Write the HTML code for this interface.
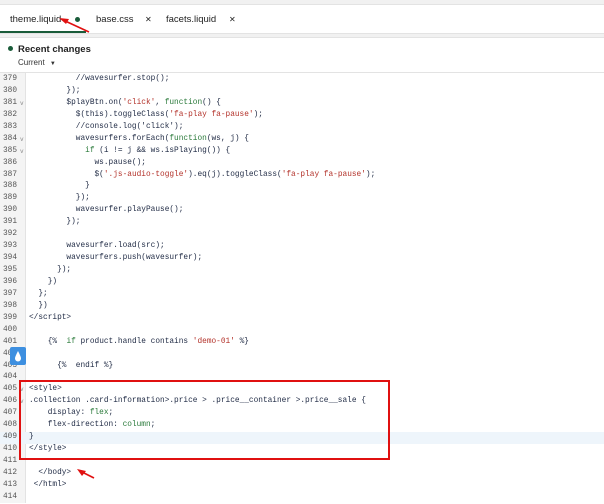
<!DOCTYPE html><html><head><style>
*{margin:0;padding:0;box-sizing:border-box}
body{width:604px;height:500px;overflow:hidden;background:#fff;font-family:"Liberation Sans",sans-serif;position:relative}
.top{position:absolute;left:0;top:0;width:604px;height:5px;background:#f1f1f1;border-bottom:1px solid #e3e3e3}
.tabs{position:absolute;top:5px;left:0;width:604px;height:28px;background:#fff;font-size:9.5px;color:#222}
.tabs span{position:absolute;top:9px}
.band{position:absolute;top:33px;left:0;width:604px;height:5px;background:#f1f1f1;border-top:1px solid #e3e3e3;border-bottom:1px solid #e3e3e3}
.rc{position:absolute;top:44px;left:18px;font-size:9.5px;font-weight:bold;color:#222}
.cur{position:absolute;top:58px;left:18px;font-size:8px;color:#333}
.code{position:absolute;top:72px;left:0;width:604px;border-top:1px solid #e3e3e3;font-family:"Liberation Mono",monospace;font-size:7.8px;line-height:11.94px;padding-top:1px}
.gut{position:absolute;left:0;top:0;width:26px;height:430px;background:#f4f4f4;border-right:1px solid #e3e3e3}
.l{position:relative;height:11.94px;white-space:pre;color:#1f2a44}
.n{position:absolute;left:3px;color:#555;width:24px}
.f{position:absolute;left:20px;color:#888;font-size:6px}
.t{position:absolute;left:29px}
.k{color:#2a7a3a}.s{color:#b3322a}
</style></head><body>
<div class="top"></div>
<div class="tabs">
<span style="left:10px">theme.liquid</span>
<div style="position:absolute;left:75px;top:12px;width:5px;height:5px;border-radius:50%;background:#1a5c3a"></div>
<span style="left:96px">base.css</span><span style="left:145px;font-size:8px;top:10px">✕</span>
<span style="left:166px">facets.liquid</span><span style="left:229px;font-size:8px;top:10px">✕</span>
<div style="position:absolute;left:0;top:26px;width:86px;height:2px;background:#1a5c3a"></div>
</div>
<svg style="position:absolute;left:55px;top:12px" width="36" height="22"><line x1="34" y1="20" x2="8" y2="8" stroke="#e01010" stroke-width="1.6"/><polygon points="4,6 14,7 11,12" fill="#e01010"/></svg>
<div class="band"></div>
<div style="position:absolute;left:8px;top:46px;width:5px;height:5px;border-radius:50%;background:#1a5c3a"></div>
<div class="rc">Recent changes</div>
<div class="cur">Current <span style="font-size:6px;margin-left:3px">▼</span></div>
<div class="code"><div class="gut"></div>
<div class="l"><span class="n">379</span><span class="t">          //wavesurfer.stop();</span></div>
<div class="l"><span class="n">380</span><span class="t">        });</span></div>
<div class="l"><span class="n">381</span><span class="f">v</span><span class="t">        $playBtn.on(<span class="s">'click'</span>, <span class="k">function</span>() {</span></div>
<div class="l"><span class="n">382</span><span class="t">          $(this).toggleClass(<span class="s">'fa-play fa-pause'</span>);</span></div>
<div class="l"><span class="n">383</span><span class="t">          //console.log('click');</span></div>
<div class="l"><span class="n">384</span><span class="f">v</span><span class="t">          wavesurfers.forEach(<span class="k">function</span>(ws, j) {</span></div>
<div class="l"><span class="n">385</span><span class="f">v</span><span class="t">            <span class="k">if</span> (i != j &amp;&amp; ws.isPlaying()) {</span></div>
<div class="l"><span class="n">386</span><span class="t">              ws.pause();</span></div>
<div class="l"><span class="n">387</span><span class="t">              $(<span class="s">'.js-audio-toggle'</span>).eq(j).toggleClass(<span class="s">'fa-play fa-pause'</span>);</span></div>
<div class="l"><span class="n">388</span><span class="t">            }</span></div>
<div class="l"><span class="n">389</span><span class="t">          });</span></div>
<div class="l"><span class="n">390</span><span class="t">          wavesurfer.playPause();</span></div>
<div class="l"><span class="n">391</span><span class="t">        });</span></div>
<div class="l"><span class="n">392</span></div>
<div class="l"><span class="n">393</span><span class="t">        wavesurfer.load(src);</span></div>
<div class="l"><span class="n">394</span><span class="t">        wavesurfers.push(wavesurfer);</span></div>
<div class="l"><span class="n">395</span><span class="t">      });</span></div>
<div class="l"><span class="n">396</span><span class="t">    })</span></div>
<div class="l"><span class="n">397</span><span class="t">  };</span></div>
<div class="l"><span class="n">398</span><span class="t">  })</span></div>
<div class="l"><span class="n">399</span><span class="t">&lt;/script&gt;</span></div>
<div class="l"><span class="n">400</span></div>
<div class="l"><span class="n">401</span><span class="t">    {%  <span class="k">if</span> product.handle contains <span class="s">'demo-01'</span> %}</span></div>
<div class="l"><span class="n">402</span></div>
<div class="l"><span class="n">403</span><span class="t">      {%  endif %}</span></div>
<div class="l"><span class="n">404</span></div>
<div class="l"><span class="n">405</span><span class="f">v</span><span class="t">&lt;style&gt;</span></div>
<div class="l"><span class="n">406</span><span class="f">v</span><span class="t">.collection .card-information&gt;.price &gt; .price__container &gt;.price__sale {</span></div>
<div class="l"><span class="n">407</span><span class="t">    display: <span class="k">flex</span>;</span></div>
<div class="l"><span class="n">408</span><span class="t">    flex-direction: <span class="k">column</span>;</span></div>
<div class="l" style="background:#eef5fb"><span class="n">409</span><span class="t">}</span></div>
<div class="l"><span class="n">410</span><span class="t">&lt;/style&gt;</span></div>
<div class="l"><span class="n">411</span></div>
<div class="l"><span class="n">412</span><span class="t">  &lt;/body&gt;</span></div>
<div class="l"><span class="n">413</span><span class="t"> &lt;/html&gt;</span></div>
<div class="l"><span class="n">414</span></div>
</div>
<div style="position:absolute;left:10px;top:347px;width:16px;height:18px;background:#3d8fe0;border-radius:2px"></div>
<svg style="position:absolute;left:14px;top:350px" width="8" height="12"><path d="M4 1 C2 5 1 7 1 8.5 A3 3 0 0 0 7 8.5 C7 7 6 5 4 1Z" fill="#fff"/></svg>
<div style="position:absolute;left:19px;top:380px;width:371px;height:80px;border:2px solid #e01010"></div>
<svg style="position:absolute;left:76px;top:468px" width="20" height="12"><line x1="18" y1="10" x2="4" y2="3" stroke="#e01010" stroke-width="1.6"/><polygon points="1,1 10,3 6,8" fill="#e01010"/></svg>
</body></html>
